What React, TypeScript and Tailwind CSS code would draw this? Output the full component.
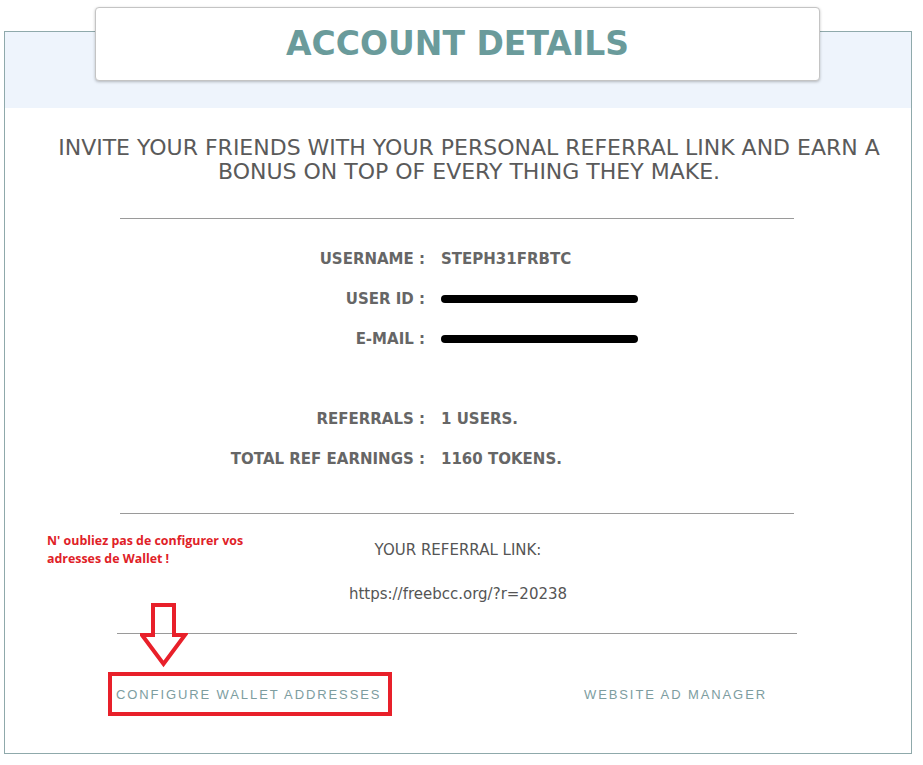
import React from 'react';

const rows = [
  { label: 'USERNAME :', value: 'STEPH31FRBTC' },
  { label: 'USER ID :', value: null },
  { label: 'E-MAIL :', value: null },
];

const refRows = [
  { label: 'REFERRALS :', value: '1 USERS.' },
  { label: 'TOTAL REF EARNINGS :', value: '1160 TOKENS.' },
];

function InfoRow({ label, value }: { label: string; value: string | null }) {
  return (
    <div className="grid grid-cols-[420px_1fr] gap-x-4 h-[40px] items-center text-[15px] font-bold text-[#666]">
      <span className="text-right">{label}</span>
      {value ? (
        <span>{value}</span>
      ) : (
        <span className="block w-[197px] h-[8px] rounded-full bg-black" />
      )}
    </div>
  );
}

export default function App() {
  return (
    <div className="relative w-[923px] h-[765px] bg-white font-['DejaVu_Sans',sans-serif] overflow-hidden">
      <div className="absolute left-[4px] top-[31px] w-[908px] h-[723px] border border-[#8fa9ab] bg-white">
        {/* top band */}
        <div className="h-[76px] bg-[#eef4fc]" />

        <div className="mt-[28px] pl-[22px] text-center text-[22px] leading-[24px] text-[#5a5a5a] whitespace-nowrap">
          <p>INVITE YOUR FRIENDS WITH YOUR PERSONAL REFERRAL LINK AND EARN A</p>
          <p>BONUS ON TOP OF EVERY THING THEY MAKE.</p>
        </div>

        <hr className="mt-[34px] ml-[115px] w-[674px] border-t border-[#9a9a9a]" />

        <div className="mt-[20px]">
          {rows.map((r) => (
            <InfoRow key={r.label} label={r.label} value={r.value} />
          ))}
          <div className="h-[40px]" />
          {refRows.map((r) => (
            <InfoRow key={r.label} label={r.label} value={r.value} />
          ))}
        </div>

        <hr className="mt-[34px] ml-[115px] w-[674px] border-t border-[#9a9a9a]" />

        <p className="mt-[26px] text-center text-[15px] leading-[20px] text-[#555]">
          YOUR REFERRAL LINK:
        </p>
        <p className="mt-[24px] text-center text-[15px] leading-[20px] text-[#555]">
          https://freebcc.org/?r=20238
        </p>

        <hr className="mt-[29px] ml-[112px] w-[680px] border-t border-[#9a9a9a]" />

        <div className="mt-[51px] flex items-center text-[13px] leading-[20px] tracking-[1.9px] text-[#7d9d9f] font-['Liberation_Sans',sans-serif]">
          <span className="ml-[111px]">CONFIGURE WALLET ADDRESSES</span>
          <span className="ml-auto mr-[144px]">WEBSITE AD MANAGER</span>
        </div>
      </div>

      {/* title card */}
      <div className="absolute left-[95px] top-[7px] w-[725px] h-[74px] bg-white border border-[#c4c4c4] rounded-[4px] shadow-[0_1px_3px_rgba(0,0,0,0.25)] flex items-center justify-center">
        <h1 className="text-[33px] font-bold text-[#6a9b9b]">
          ACCOUNT DETAILS
        </h1>
      </div>

      {/* annotation */}
      <div className="absolute left-[47px] top-[532px] text-[12.4px] leading-[18px] font-bold text-[#e02127] font-['Open_Sans',sans-serif]">
        <p>N' oubliez pas de configurer vos</p>
        <p>adresses de Wallet !</p>
      </div>

      <svg className="absolute left-[140px] top-[602px]" width="48" height="66" viewBox="0 0 48 66">
        <path d="M13 3 H34 V33 H45 L23.5 62 L2 33 H13 Z" fill="none" stroke="#e8202a" strokeWidth="4" strokeLinejoin="miter" />
      </svg>

      <div className="absolute left-[108px] top-[672px] w-[284px] h-[44px] border-4 border-[#e8202a]" />
    </div>
  );
}
